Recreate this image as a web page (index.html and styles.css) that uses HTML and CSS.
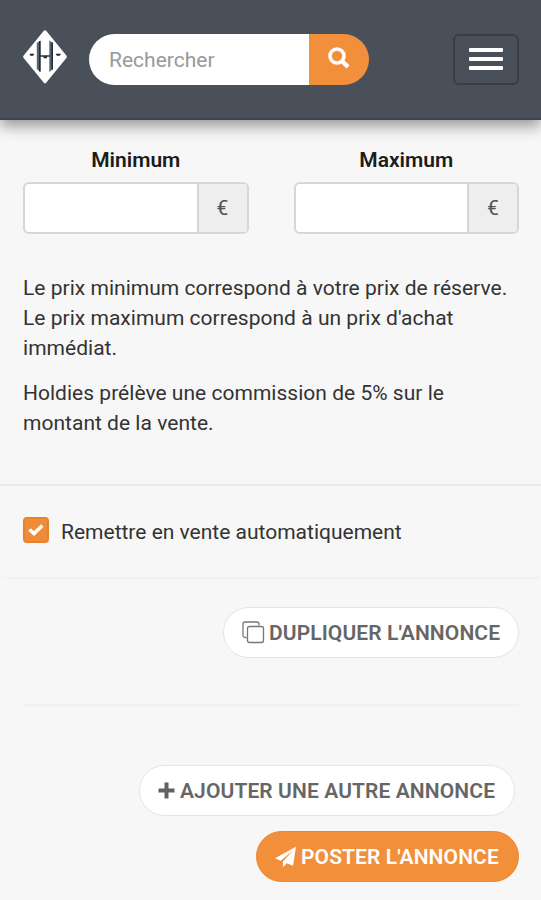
FILE: index.html
```html
<!DOCTYPE html>
<html lang="fr">
<head>
    <meta charset="UTF-8">
    <meta name="viewport" content="width=device-width, initial-scale=1.0">
    <title>Holdies</title>
    <link rel="stylesheet" href="styles.css">
</head>
<body>
    <header class="navbar">
        <a href="#" class="logo">
            <svg width="46" height="55" viewBox="0 0 46 55">
                <path d="M23 2.8 L43.4 27.800 L23 52.800 L2.6 27.800 Z" fill="#fff" stroke="#fff" stroke-width="3" stroke-linejoin="round"/>
                <path d="M14.800 14 L18.500 11.500 V43 L14.800 40 Z" fill="#59636d"/>
                <path d="M31 14 L27.300 11.500 V43 L31 40 Z" fill="#59636d"/>
                <path d="M17.800 12V42.500M30.200 13.500V40.500" stroke="#1f2c3a" stroke-width="1.500"/>
                <path d="M18 27 H28 M21.500 28.500 H25" stroke="#27333f" stroke-width="1.600"/>
                <path d="M8 25 H12 L11 26.500 H8.500 Z M34 25 H38.500 L37.500 26.500 H35 Z" fill="#1f2c3a" stroke="#1f2c3a" stroke-width="0.600"/>
            </svg>
        </a>
        <form class="search">
            <input type="text" placeholder="Rechercher">
            <button type="button" aria-label="Rechercher">
                <svg width="22" height="22" viewBox="0 0 22 22">
                    <circle cx="9" cy="9" r="7" fill="none" stroke="#fff" stroke-width="3.600"/>
                    <path d="M14 14 L20 20" stroke="#fff" stroke-width="4.200"/>
                </svg>
            </button>
        </form>
        <button type="button" class="menu-btn" aria-label="Menu">
            <span></span>
            <span></span>
            <span></span>
        </button>
    </header>

    <main>
        <section class="price-panel">
            <div class="price-row">
                <div class="price-group">
                    <label for="min">Minimum</label>
                    <div class="input-group">
                        <input type="text" id="min">
                        <span class="addon">€</span>
                    </div>
                </div>
                <div class="price-group">
                    <label for="max">Maximum</label>
                    <div class="input-group">
                        <input type="text" id="max">
                        <span class="addon">€</span>
                    </div>
                </div>
            </div>
            <p>Le prix minimum correspond à votre prix de réserve.<br>Le prix maximum correspond à un prix d'achat<br>immédiat.</p>
            <p>Holdies prélève une commission de 5% sur le<br>montant de la vente.</p>
        </section>

        <section class="option-panel">
            <span class="checkbox">
                <svg width="16" height="13" viewBox="0 0 16 13">
                    <path d="M1.500 5.500 L6 9.500 L14.300 1.500" fill="none" stroke="#fff" stroke-width="3.600"/>
                </svg>
            </span>
            <span class="option-label">Remettre en vente automatiquement</span>
        </section>

        <section class="actions">
            <button type="button" class="btn btn-copy">
                <svg width="23" height="23" viewBox="0 0 23 23" fill="none" stroke="#777" stroke-width="1.300">
                    <path d="M4.500 16.500H3A2 2 0 0 1 1 14.500V3A2 2 0 0 1 3 1H15A2 2 0 0 1 17 3V4.500"/>
                    <rect x="5.500" y="5.500" width="16" height="16" rx="2"/>
                </svg>
                <span>DUPLIQUER L'ANNONCE</span>
            </button>
            <hr>
            <button type="button" class="btn btn-add">
                <svg width="17" height="17" viewBox="0 0 17 17">
                    <path d="M8.500 0.500 V16.500 M0.500 8.500 H16.500" stroke="#616161" stroke-width="4"/>
                </svg>
                <span>AJOUTER UNE AUTRE ANNONCE</span>
            </button>
            <button type="button" class="btn btn-post">
                <svg width="22" height="22" viewBox="0 0 22 22" fill="#fff">
                    <path d="M21 0.800 L0 12.300 L5.700 14.800 L18 4.600 L8 15.500 V21.300 L11.500 17.300 L18 19.800 Z"/>
                </svg>
                <span>POSTER L'ANNONCE</span>
            </button>
        </section>
    </main>
</body>
</html>
```
FILE: styles.css
```css
* {
    box-sizing: border-box;
}

body {
    margin: 0;
    background-color: #f7f7f7;
    font-family: Roboto, "Liberation Sans", sans-serif;
    font-size: 21px;
    line-height: 30px;
    color: #333;
}

input,
button {
    font-family: inherit;
    font-size: inherit;
}

.navbar {
    display: flex;
    align-items: flex-start;
    height: 120px;
    padding: 0 22px;
    background-color: #495059;
    border-bottom: 2px solid #42454b;
    box-shadow: 0 6px 14px rgba(0, 0, 0, 0.4);
}

.logo {
    display: block;
    height: 55px;
    margin-top: 29px;
}

.logo svg {
    display: block;
}

.search {
    display: flex;
    width: 280px;
    height: 51px;
    margin: 34px 0 0 21px;
}

.search input {
    flex: 1;
    min-width: 0;
    padding: 0 20px;
    border: none;
    border-radius: 26px 0 0 26px;
    background-color: #fff;
}

.search input::placeholder {
    color: #999;
    opacity: 1;
}

.search button {
    display: flex;
    align-items: center;
    width: 60px;
    padding: 0 0 4px 19px;
    border: none;
    border-radius: 0 26px 26px 0;
    background-color: #f28f3b;
}

.menu-btn {
    display: flex;
    flex-direction: column;
    align-items: center;
    justify-content: center;
    gap: 5px;
    width: 66px;
    height: 51px;
    margin: 34px 0 0 auto;
    padding: 0 0 1px;
    border: 2px solid #3a3e44;
    border-radius: 6px;
    background: none;
}

.menu-btn span {
    width: 34px;
    height: 4px;
    border-radius: 1px;
    background-color: #fff;
}

.price-panel {
    height: 366px;
    padding: 25px 22px 0 23px;
    border-bottom: 2px solid #e9e9e9;
}

.price-row {
    display: flex;
    gap: 45px;
    margin-bottom: 39px;
}

.price-group {
    flex: 1;
    min-width: 0;
}

.price-group label {
    display: block;
    margin-bottom: 7px;
    font-weight: 600;
    color: #1c1c1c;
    text-align: center;
}

.input-group {
    display: flex;
    height: 52px;
    border: 2px solid #d6d6d6;
    border-radius: 6px;
    background-color: #fff;
    overflow: hidden;
}

.input-group input {
    flex: 1;
    min-width: 0;
    border: none;
    background: none;
}

.addon {
    display: flex;
    align-items: center;
    justify-content: center;
    width: 50px;
    border-left: 2px solid #d6d6d6;
    background-color: #eee;
    color: #555;
}

p {
    margin: 0 0 15px;
    letter-spacing: 0.02px;
    white-space: nowrap;
}

.option-panel {
    display: flex;
    height: 93px;
    padding: 31px 23px 0;
    border-bottom: 2px solid #f1f1f1;
    border-radius: 0 0 6px 6px;
}

.checkbox {
    display: flex;
    align-items: center;
    justify-content: center;
    width: 26px;
    height: 26px;
    border: 2px solid #e8832b;
    border-radius: 4px;
    background-color: #ef8c3a;
}

.option-label {
    margin-left: 12px;
}

.actions {
    display: flex;
    flex-direction: column;
    align-items: flex-end;
    padding: 28px 22px 0 23px;
}

.btn {
    display: flex;
    align-items: center;
    height: 51px;
    padding: 0 18px;
    border: 1px solid #e4e4e4;
    border-radius: 26px;
    background-color: #fff;
    font-weight: 600;
    letter-spacing: 0.1px;
    color: #666;
    white-space: nowrap;
}

.btn svg {
    flex: none;
    margin-right: 4px;
}

.btn-copy {
    width: 296px;
}

hr {
    width: 100%;
    height: 2px;
    margin: 46px 0 59px;
    border: none;
    background-color: #f1f1f1;
}

.btn-add {
    width: 376px;
    margin-right: 4px;
}

.btn-add svg {
    margin-right: 5px;
}

.btn-post {
    width: 263px;
    margin-top: 15px;
    border-color: #ec862f;
    background-color: #f28f3b;
    color: #fff;
}
```
